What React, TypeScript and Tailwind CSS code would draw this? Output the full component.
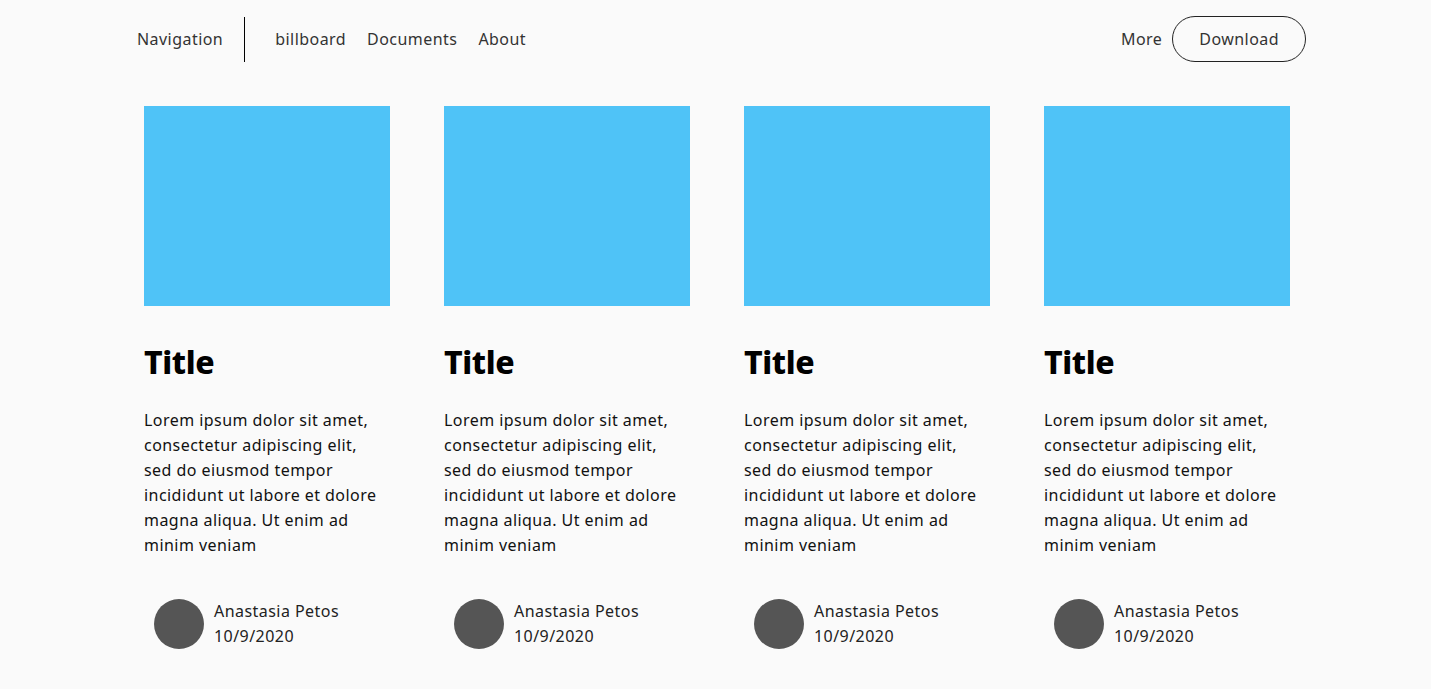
const lines = [
  'Lorem ipsum dolor sit amet,',
  'consectetur adipiscing elit,',
  'sed do eiusmod tempor',
  'incididunt ut labore et dolore',
  'magna aliqua. Ut enim ad',
  'minim veniam',
]

function Card() {
  return (
    <div className="flex flex-col">
      <div className="h-[200px] w-[246px] bg-[#4fc3f7]" />
      <h2 className="mt-[34px] text-[32px] font-extrabold leading-[44px] tracking-[-0.4px] text-black">Title</h2>
      <p className="mt-[24px] text-[16px] leading-[25px] text-[#111]">
        {lines.map((l, i) => (
          <span key={i} className="block whitespace-nowrap">
            {l}
          </span>
        ))}
      </p>
      <div className="mt-[41px] flex items-start pl-[10px]">
        <div className="h-[50px] w-[50px] rounded-full bg-[#555]" />
        <div className="ml-[10px] text-[16px] leading-[25px] text-[#222]">
          <div>Anastasia Petos</div>
          <div>10/9/2020</div>
        </div>
      </div>
    </div>
  )
}

export default function App() {
  return (
    <div
      className="min-h-screen bg-[#fafafa] tracking-[0.45px]"
      style={{ fontFamily: '"Noto Sans", "Open Sans", sans-serif' }}
    >
      {/* Header */}
      <header className="flex items-center justify-between py-4 pl-[137px] pr-[125px] text-[16px] text-[#333]">
        <div className="flex items-center">
          <span>Navigation</span>
          <div className="ml-[21px] h-[45px] w-px bg-black" />
          <nav className="ml-[30px] flex gap-[21px]">
            <a href="#">billboard</a>
            <a href="#">Documents</a>
            <a href="#">About</a>
          </nav>
        </div>
        <div className="flex items-center gap-[10px]">
          <a href="#">More</a>
          <button className="h-[46px] rounded-full border border-[#222] px-[26px] text-[#333]">
            Download
          </button>
        </div>
      </header>

      {/* Cards */}
      <main className="mt-[28px] grid grid-cols-[repeat(4,246px)] gap-x-[54px] pl-[144px]">
        <Card />
        <Card />
        <Card />
        <Card />
      </main>
    </div>
  )
}
